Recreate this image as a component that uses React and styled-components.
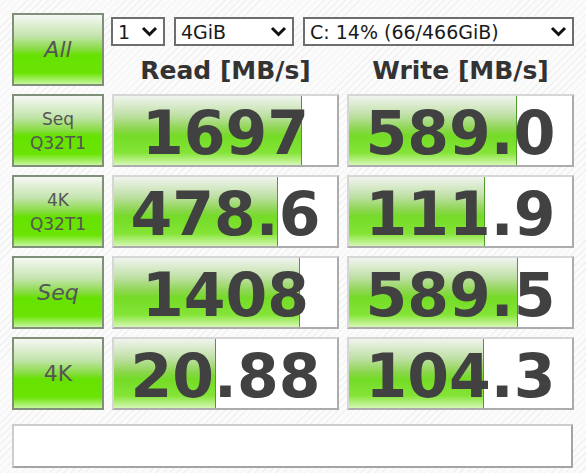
import React from "react";
import styled, { createGlobalStyle } from "styled-components";

const GlobalStyle = createGlobalStyle`
  html, body {
    margin: 0;
    padding: 0;
  }
  body {
    width: 586px;
    height: 473px;
    overflow: hidden;
    font-family: "DejaVu Sans", Verdana, sans-serif;
    background: repeating-linear-gradient(
      -45deg,
      #fbfbfb 0px,
      #fbfbfb 4px,
      #f1f1f1 4px,
      #f1f1f1 5px
    );
  }
`;

const Main = styled.div`
  display: grid;
  grid-template-columns: 92px 227px 227px;
  grid-auto-rows: 73px;
  column-gap: 8px;
  row-gap: 8px;
  padding: 13px 0 0 12px;
`;

const TestButton = styled.div`
  box-sizing: border-box;
  display: flex;
  flex-direction: column;
  align-items: center;
  justify-content: center;
  border: 2px solid #7f8f78;
  background: linear-gradient(
    to bottom,
    #f6f8f4 0%,
    #c4e4ae 30%,
    #86dc40 50%,
    #66e200 58%,
    #6ae404 84%,
    #c6f69e 100%
  );
  color: #555;
  font-size: ${(p) => (p.big ? "22px" : "17px")};
  font-style: ${(p) => (p.slant ? "italic" : "normal")};
  line-height: 24px;
`;

const TopArea = styled.div`
  grid-column: 2 / 4;
  display: flex;
  flex-direction: column;
`;

const Selects = styled.div`
  display: flex;
  gap: 9px;
  margin: 4px 0 0 -1px;
`;

const Select = styled.div`
  box-sizing: border-box;
  width: ${(p) => p.w}px;
  height: 29px;
  border: 2px solid #6e6e6e;
  background: #fff;
  display: flex;
  align-items: center;
  justify-content: space-between;
  padding: 0 5px 0 5px;
  font-size: 19px;
  color: #1a1a1a;
`;

const Chevron = () => (
  <svg width="17" height="11" viewBox="0 0 17 11">
    <path d="M2 2 L8.5 8.5 L15 2" fill="none" stroke="#111" strokeWidth="3" />
  </svg>
);

const Headers = styled.div`
  display: grid;
  grid-template-columns: 227px 227px;
  column-gap: 8px;
  margin-top: 11px;
`;

const Header = styled.div`
  text-align: center;
  font-weight: bold;
  font-size: 25px;
  color: #333;
  line-height: 28px;
`;

const Cell = styled.div`
  box-sizing: border-box;
  position: relative;
  background: #fff;
  border: 2px solid #d6d6d6;
  border-right-color: #acacac;
  border-bottom-color: #acacac;
  overflow: hidden;
`;

const Bar = styled.div`
  position: absolute;
  left: 0;
  top: 0;
  bottom: 0;
  border-right: 1px solid #4f9c2c;
  background: linear-gradient(
    to bottom,
    #f0f4ee 0%,
    #bfe0a6 28%,
    #8cd64e 48%,
    #74dc26 58%,
    #84e436 82%,
    #d6f7b4 100%
  );
`;

const Value = styled.div`
  position: relative;
  height: 100%;
  display: flex;
  align-items: center;
  justify-content: center;
  padding: 4px 0 0 0;
  box-sizing: border-box;
  font-weight: bold;
  font-size: 60px;
  color: #414141;
`;

const StatusBar = styled.div`
  grid-column: 1 / 4;
  box-sizing: border-box;
  width: 561px;
  height: 44px;
  margin-top: 6px;
  background: #fff;
  border: 2px solid #cdcdcd;
  border-right-color: #a4a4a4;
  border-bottom-color: #a4a4a4;
`;

const rows = [
  { label: ["Seq", "Q32T1"], read: "1697", readBar: 187, write: "589.0", writeBar: 167 },
  { label: ["4K", "Q32T1"], read: "478.6", readBar: 163, write: "111.9", writeBar: 135 },
  { label: ["Seq"], big: true, slant: true, read: "1408", readBar: 185, write: "589.5", writeBar: 168 },
  { label: ["4K"], big: true, read: "20.88", readBar: 101, write: "104.3", writeBar: 134 },
];

const ResultCell = ({ value, bar }) => (
  <Cell>
    <Bar style={{ width: bar }} />
    <Value>{value}</Value>
  </Cell>
);

export default function App() {
  return (
    <>
      <GlobalStyle />
      <Main>
        <TestButton big slant>All</TestButton>
        <TopArea>
          <Selects>
            <Select w={54}>
              <span>1</span>
              <Chevron />
            </Select>
            <Select w={120}>
              <span>4GiB</span>
              <Chevron />
            </Select>
            <Select w={271}>
              <span>C: 14% (66/466GiB)</span>
              <Chevron />
            </Select>
          </Selects>
          <Headers>
            <Header>Read [MB/s]</Header>
            <Header>Write [MB/s]</Header>
          </Headers>
        </TopArea>
        {rows.map((r) => (
          <React.Fragment key={r.read}>
            <TestButton big={r.big} slant={r.slant}>
              {r.label.map((l) => (
                <span key={l}>{l}</span>
              ))}
            </TestButton>
            <ResultCell value={r.read} bar={r.readBar} />
            <ResultCell value={r.write} bar={r.writeBar} />
          </React.Fragment>
        ))}
        <StatusBar />
      </Main>
    </>
  );
}
